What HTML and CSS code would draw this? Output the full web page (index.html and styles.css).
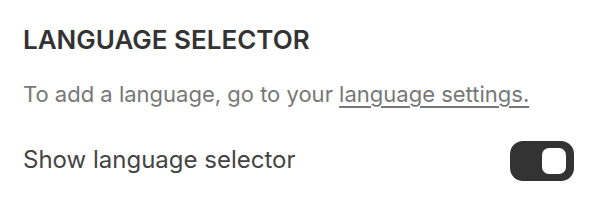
FILE: index.html
```
<!DOCTYPE html>
<html lang="en">
<head>
    <meta charset="UTF-8">
    <meta name="viewport" content="width=device-width, initial-scale=1.0">
    <title>Language selector</title>
    <link rel="stylesheet" href="styles.css">
</head>
<body>
    <div class="panel">
        <h2 class="title">LANGUAGE SELECTOR</h2>
        <p class="hint">To add a language, go to your <a href="#">language settings.</a></p>
        <div class="row">
            <span class="label">Show language selector</span>
            <div class="toggle on"><div class="knob"></div></div>
        </div>
    </div>
</body>
</html>
```
FILE: styles.css
```
body {
    font-family: Inter, "Noto Sans", sans-serif;
    background-color: #fff;
    margin: 0;
}
.panel {
    padding: 24px 24px 0 23px;
}
.title {
    margin: 0;
    font-size: 26px;
    font-weight: 600;
    color: #333;
    line-height: 32px;
}
.hint {
    margin: 24px 0 0;
    font-size: 22px;
    color: #777;
    line-height: 28px;
}
.hint a {
    color: #777;
    text-decoration: underline;
    text-underline-offset: 4px;
}
.row {
    display: flex;
    justify-content: space-between;
    align-items: center;
    margin-top: 33px;
}
.label {
    font-size: 24px;
    line-height: 29px;
    color: #444;
    margin-bottom: 4px;
}
.toggle {
    width: 64px;
    height: 40px;
    border-radius: 13px;
    background: #333;
    box-sizing: border-box;
    padding: 7px 8px;
    display: flex;
    justify-content: flex-end;
}
.knob {
    width: 24px;
    height: 26px;
    border-radius: 7px;
    background: #fff;
}
```
